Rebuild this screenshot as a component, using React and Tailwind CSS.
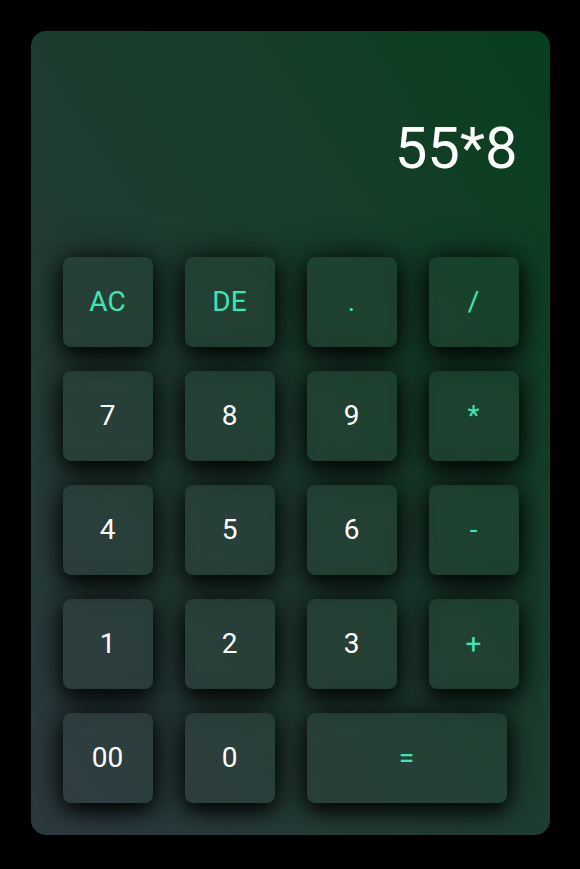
const KEYS = [
  { label: 'AC', accent: true },
  { label: 'DE', accent: true },
  { label: '.', accent: true },
  { label: '/', accent: true },
  { label: '7' },
  { label: '8' },
  { label: '9' },
  { label: '*', accent: true },
  { label: '4' },
  { label: '5' },
  { label: '6' },
  { label: '-', accent: true },
  { label: '1' },
  { label: '2' },
  { label: '3' },
  { label: '+', accent: true },
  { label: '00' },
  { label: '0' },
  { label: '=', accent: true, wide: true },
]

function Key({ label, accent, wide }) {
  return (
    <button
      className={
        'flex h-[90px] items-center justify-center rounded-lg bg-white/[0.025] text-[28px] shadow-[0_8px_20px_rgba(0,0,0,0.85),0_0_34px_rgba(0,0,0,0.7)] ' +
        (wide ? 'col-span-2 w-[200px] ' : 'w-[90px] ') +
        (accent ? 'text-[#3ee6b6]' : 'text-white')
      }
    >
      {label}
    </button>
  )
}

export default function App() {
  return (
    <div className="flex h-screen justify-center bg-black pt-[31px]" style={{ fontFamily: 'Roboto, "Noto Sans", sans-serif' }}>
      <div className="flex h-[804px] w-[519px] flex-col rounded-[15px] bg-linear-to-bl from-[#053f1d] to-[#2c393f] p-8">
        {/* display */}
        <div className="mb-[80px] pt-[56px] text-right text-[58px] leading-none text-white">55*8</div>

        <div className="grid grid-cols-[repeat(4,90px)] gap-x-8 gap-y-6">
          {KEYS.map((k) => (
            <Key key={k.label} {...k} />
          ))}
        </div>
      </div>
    </div>
  )
}
